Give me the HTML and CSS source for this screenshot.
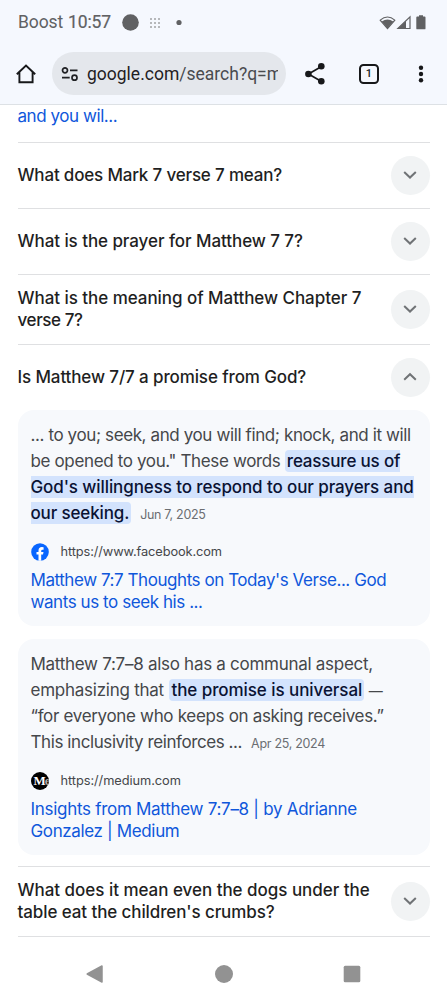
FILE: index.html
```
<!DOCTYPE html>
<html lang="en">
<head>
<meta charset="utf-8">
<title>Google Search</title>
<link rel="stylesheet" href="styles.css">
</head>
<body>
<header class="chrome">
  <div class="status">
    <span class="carrier">Boost</span><span class="clock">10:57</span>
    <svg class="status-left" width="64" height="20" viewBox="0 0 64 20">
      <circle cx="8.500" cy="9.500" r="8.3" fill="#606163"/>
      <g fill="#b6b8bb">
        <path d="M28 5h2v2h-2zM32 5h2v2h-2zM36 5h2v2h-2zM28 9h2v2h-2zM32 9h2v2h-2zM36 9h2v2h-2zM28 13h2v2h-2zM32 13h2v2h-2zM36 13h2v2h-2z"/>
      </g>
      <circle cx="57" cy="9.500" r="2.6" fill="#606163"/>
    </svg>
    <svg class="status-right" width="48" height="16" viewBox="0 0 48 16">
      <path d="M1.2 5.2Q8.5-1.2 15.8 5.2L8.5 13.7Z" fill="none" stroke="#606163" stroke-width="1.1"/>
      <path d="M2.7 6.4Q8.5 2.6 14.3 6.4L8.5 13.5Z" fill="#606163"/>
      <path d="M18.9 13.5L31 1.8V13.5Z" fill="none" stroke="#606163" stroke-width="1.2"/>
      <path d="M18.5 14L27 5.8V14Z" fill="#606163"/>
      <path d="M38.2 1.6h1.8V0.3h4v1.3h1.6q.9 0 .9.9v10.9q0 .9-.9.9h-7.4q-.9 0-.9-.9V2.500q0-.9.9-.9z" fill="#606163"/>
    </svg>
  </div>
  <div class="toolbar">
    <svg class="home" width="22" height="22" viewBox="0 0 22 22" fill="none" stroke="#17181a" stroke-width="1.9"><path d="M1.8 11.300L11 2.600L20.200 11.300M4.400 9.200V19.200H17.600V9.200"/></svg>
    <div class="omnibox">
      <svg width="18" height="16" viewBox="0 0 18 16" fill="none" stroke="#1f2023" stroke-width="1.7"><circle cx="4" cy="4.300" r="2.500"/><path d="M9 4.300h7.500M1 11.700h7.700"/><circle cx="13.500" cy="11.700" r="2.500"/></svg>
      <div class="url"><span class="host">google.com</span>/search?q=m</div>
    </div>
    <svg class="share" width="24" height="24" viewBox="0 0 24 24"><path d="M18.500 4.500L5.500 12L18.500 19.500" fill="none" stroke="#17181a" stroke-width="1.700"/><g fill="#17181a"><circle cx="18.300" cy="4.300" r="3.300"/><circle cx="5.400" cy="12" r="3.300"/><circle cx="18.300" cy="19.300" r="3.300"/></g></svg>
    <div class="tabs">1</div>
    <svg class="more" width="6" height="20" viewBox="0 0 6 20" fill="#17181a"><circle cx="3" cy="3.700" r="2.200"/><circle cx="3" cy="10" r="2.200"/><circle cx="3" cy="16.300" r="2.200"/></svg>
  </div>
</header>
<main class="results">
  <p class="link tail"><span class="t1">and you wil...</span></p>
  <div class="question">
    <p><span class="q1">What does Mark 7 verse 7 mean?</span></p>
    <button class="toggle"><svg width="14" height="14" viewBox="0 0 14 14"><path d="M1.200 4L7 9.500L12.800 4"/></svg></button>
  </div>
  <div class="question">
    <p><span class="q2">What is the prayer for Matthew 7 7?</span></p>
    <button class="toggle"><svg width="14" height="14" viewBox="0 0 14 14"><path d="M1.200 4L7 9.500L12.800 4"/></svg></button>
  </div>
  <div class="question tall">
    <p><span class="q3">What is the meaning of Matthew Chapter 7</span><br><span class="q4">verse 7?</span></p>
    <button class="toggle"><svg width="14" height="14" viewBox="0 0 14 14"><path d="M1.200 4L7 9.500L12.800 4"/></svg></button>
  </div>
  <div class="question">
    <p><span class="q5">Is Matthew 7/7 a promise from God?</span></p>
    <button class="toggle"><svg width="14" height="14" viewBox="0 0 14 14"><path d="M1.200 9.700L7 4.200L12.800 9.700"/></svg></button>
  </div>
  <article class="card">
    <p class="snippet">
      <span class="line a1">... to you; seek, and you will find; knock, and it will</span>
      <span class="line a2">be opened to you." These words <mark class="start">reassure us of</mark></span>
      <span class="line a3"><mark>God's willingness to respond to our prayers and</mark></span>
      <span class="line a4"><mark class="end">our seeking.</mark><time>Jun 7, 2025</time></span>
    </p>
    <div class="source">
      <svg width="18" height="18" viewBox="0 0 18 18"><circle cx="9" cy="9" r="8.800" fill="#0866ff"/><path d="M7.500 17.800V11.600H5.500V8.900H7.500V7.500Q7.500 4 10.900 4Q12 4 12.600 4.200V6.700H11.500Q10.200 6.700 10.200 7.900V8.900H12.500L12 11.600H10.200V17.800Z" fill="#fff"/></svg>
      <span class="u1">https://www.facebook.com</span>
    </div>
    <p class="link title"><span class="l1">Matthew 7:7 Thoughts on Today's Verse... God</span><br><span class="l2">wants us to seek his ...</span></p>
  </article>
  <article class="card second">
    <p class="snippet">
      <span class="line b1">Matthew 7:7–8 also has a communal aspect,</span>
      <span class="line b2">emphasizing that <mark class="start end">the promise is universal</mark> <span class="dash">—</span></span>
      <span class="line b3">“for everyone who keeps on asking receives.”</span>
      <span class="line b4">This inclusivity reinforces ...<time>Apr 25, 2024</time></span>
    </p>
    <div class="source">
      <span class="medium">M<i>e</i></span>
      <span class="u2">https://medium.com</span>
    </div>
    <p class="link title"><span class="l3">Insights from Matthew 7:7–8 | by Adrianne</span><br><span class="l4">Gonzalez | Medium</span></p>
  </article>
  <div class="question tall last">
    <p><span class="q6">What does it mean even the dogs under the</span><br><span class="q7">table eat the children's crumbs?</span></p>
    <button class="toggle"><svg width="14" height="14" viewBox="0 0 14 14"><path d="M1.200 4L7 9.500L12.800 4"/></svg></button>
  </div>
</main>
<nav class="system-nav">
  <svg width="20" height="20" viewBox="0 0 20 20"><path d="M2.200 10L17 2V18Z" stroke="#929292" stroke-width="1.500" stroke-linejoin="round"/></svg>
  <svg width="20" height="20" viewBox="0 0 20 20"><circle cx="10" cy="10" r="9"/></svg>
  <svg width="20" height="20" viewBox="0 0 20 20"><rect x="1.700" y="1.700" width="16.600" height="16.600" rx="1.500"/></svg>
</nav>
</body>
</html>
```
FILE: styles.css
```
* { box-sizing: border-box; }
body {
  margin: 0;
  width: 447px;
  height: 1000px;
  overflow: hidden;
  background: #fff;
  color: #1f1f1f;
  font: 17px/21.6px Inter, "Liberation Sans", sans-serif;
  letter-spacing: -0.3px;
}
p { margin: 0; }
svg { display: block; flex: none; }

.chrome {
  height: 105px;
  background: #f5f8fe;
  border-bottom: 1px solid #dde1e5;
  font-family: Roboto, sans-serif;
  letter-spacing: 0;
}
.status {
  display: flex;
  align-items: center;
  height: 44px;
  padding: 1px 20px 0 18px;
  color: #606163;
  font-size: 17.500px;
}
.carrier { width: 50px; letter-spacing: -0.1px; }
.clock { width: 54px; letter-spacing: -0.1px; -webkit-text-stroke: 0.2px #606163; }
.status-right { margin-left: auto; }
.toolbar { display: flex; align-items: center; height: 60px; padding: 0 0 1px 15px; }
.omnibox {
  display: flex;
  align-items: center;
  gap: 8px;
  width: 234px;
  height: 43px;
  margin-left: 15px;
  padding: 0 8px 0 9px;
  border-radius: 22px;
  background: #e4e7ec;
}
.url {
  flex: 1;
  overflow: hidden;
  white-space: nowrap;
  color: #494b4f;
  font-size: 17.500px;
  line-height: 26px;
}
.host { color: #1f2023; }
.share { margin-left: 17px; }
.tabs {
  width: 20px;
  height: 20px;
  margin-left: 32px;
  border: 2px solid #17181a;
  border-radius: 4.500px;
  color: #17181a;
  font-size: 11px;
  font-weight: 500;
  line-height: 16px;
  text-align: center;
}
.more { margin-left: 39px; }

.results { height: 843px; padding: 0 17.500px; }
.link { color: #0f57db; white-space: nowrap; }
.tail { height: 37px; padding-top: 1px; }
.question {
  display: flex;
  align-items: center;
  justify-content: space-between;
  height: 66px;
  border-top: 1px solid #dfe0e2;
  font-weight: 500;
  white-space: nowrap;
}
.question.tall { height: 70px; }
.question.last { height: 71px; margin-top: 11px; border-bottom: 1px solid #dfe0e2; }
.toggle {
  display: grid;
  place-items: center;
  width: 39px;
  height: 39px;
  margin-bottom: 1px;
  padding: 0;
  border: 0;
  border-radius: 50%;
  background: #f1f3f4;
}
.toggle path { fill: none; stroke: #707376; stroke-width: 2; }

.card {
  height: 216px;
  padding: 12px 13px 0;
  border-radius: 16px;
  background: #f7f9fc;
}
.card.second { margin-top: 13px; }
.snippet { color: #45474a; line-height: 26px; white-space: nowrap; }
.line { display: block; height: 26px; }
mark {
  padding: 1px 0;
  background: #d3e3fd;
  color: #0a1233;
  font-weight: 500;
}
mark.start { padding-left: 2px; border-radius: 4px 0 0 4px; }
mark.end { padding-right: 2px; border-radius: 0 4px 4px 0; }
mark.start.end { margin-left: 1px; border-radius: 4px; }
time { margin-left: 9px; color: #6b6e72; font-size: 12.500px; letter-spacing: -0.3px; }
.source {
  display: flex;
  align-items: center;
  gap: 12px;
  height: 22px;
  margin: 15px 0 7px;
  color: #45474a;
  font-size: 12.800px;
}
.medium {
  width: 18px;
  height: 18px;
  overflow: hidden;
  border-radius: 50%;
  padding-left: 3px;
  background: #000;
  color: #fff;
  font: 700 13px/18px "Liberation Serif", serif;
  letter-spacing: -1px;
}
.medium i { color: #aaa; font-style: normal; }

/* Per-line tracking */
.t1 { letter-spacing: -0.44px; }
.q1 { letter-spacing: -0.18px; }
.q2 { letter-spacing: -0.07px; }
.q3 { letter-spacing: -0.05px; }
.q4 { letter-spacing: -0.4px; }
.q5 { letter-spacing: -0.12px; }
.q6 { letter-spacing: -0.03px; }
.q7 { letter-spacing: -0.1px; }
.a1 { letter-spacing: -0.39px; }
.a2 { letter-spacing: -0.36px; }
.a2 mark { letter-spacing: -0.18px; }
.a3 { letter-spacing: -0.1px; }
.a4 { letter-spacing: -0.15px; }
.b1 { letter-spacing: -0.28px; }
.b2 { letter-spacing: -0.25px; }
.b2 mark { letter-spacing: -0.07px; }
.b3 { letter-spacing: -0.33px; }
.b4 { letter-spacing: -0.41px; }
.dash { font-size: 14px; }
.u1 { letter-spacing: -0.1px; }
.u2 { letter-spacing: -0.06px; }
.l1 { letter-spacing: -0.44px; }
.l2 { letter-spacing: -0.43px; }
.l3 { letter-spacing: -0.29px; }
.l4 { letter-spacing: -0.36px; }

.system-nav {
  display: flex;
  justify-content: space-between;
  height: 52px;
  padding: 16px 85px 0 85px;
}
.system-nav svg { fill: #929292; }
```
